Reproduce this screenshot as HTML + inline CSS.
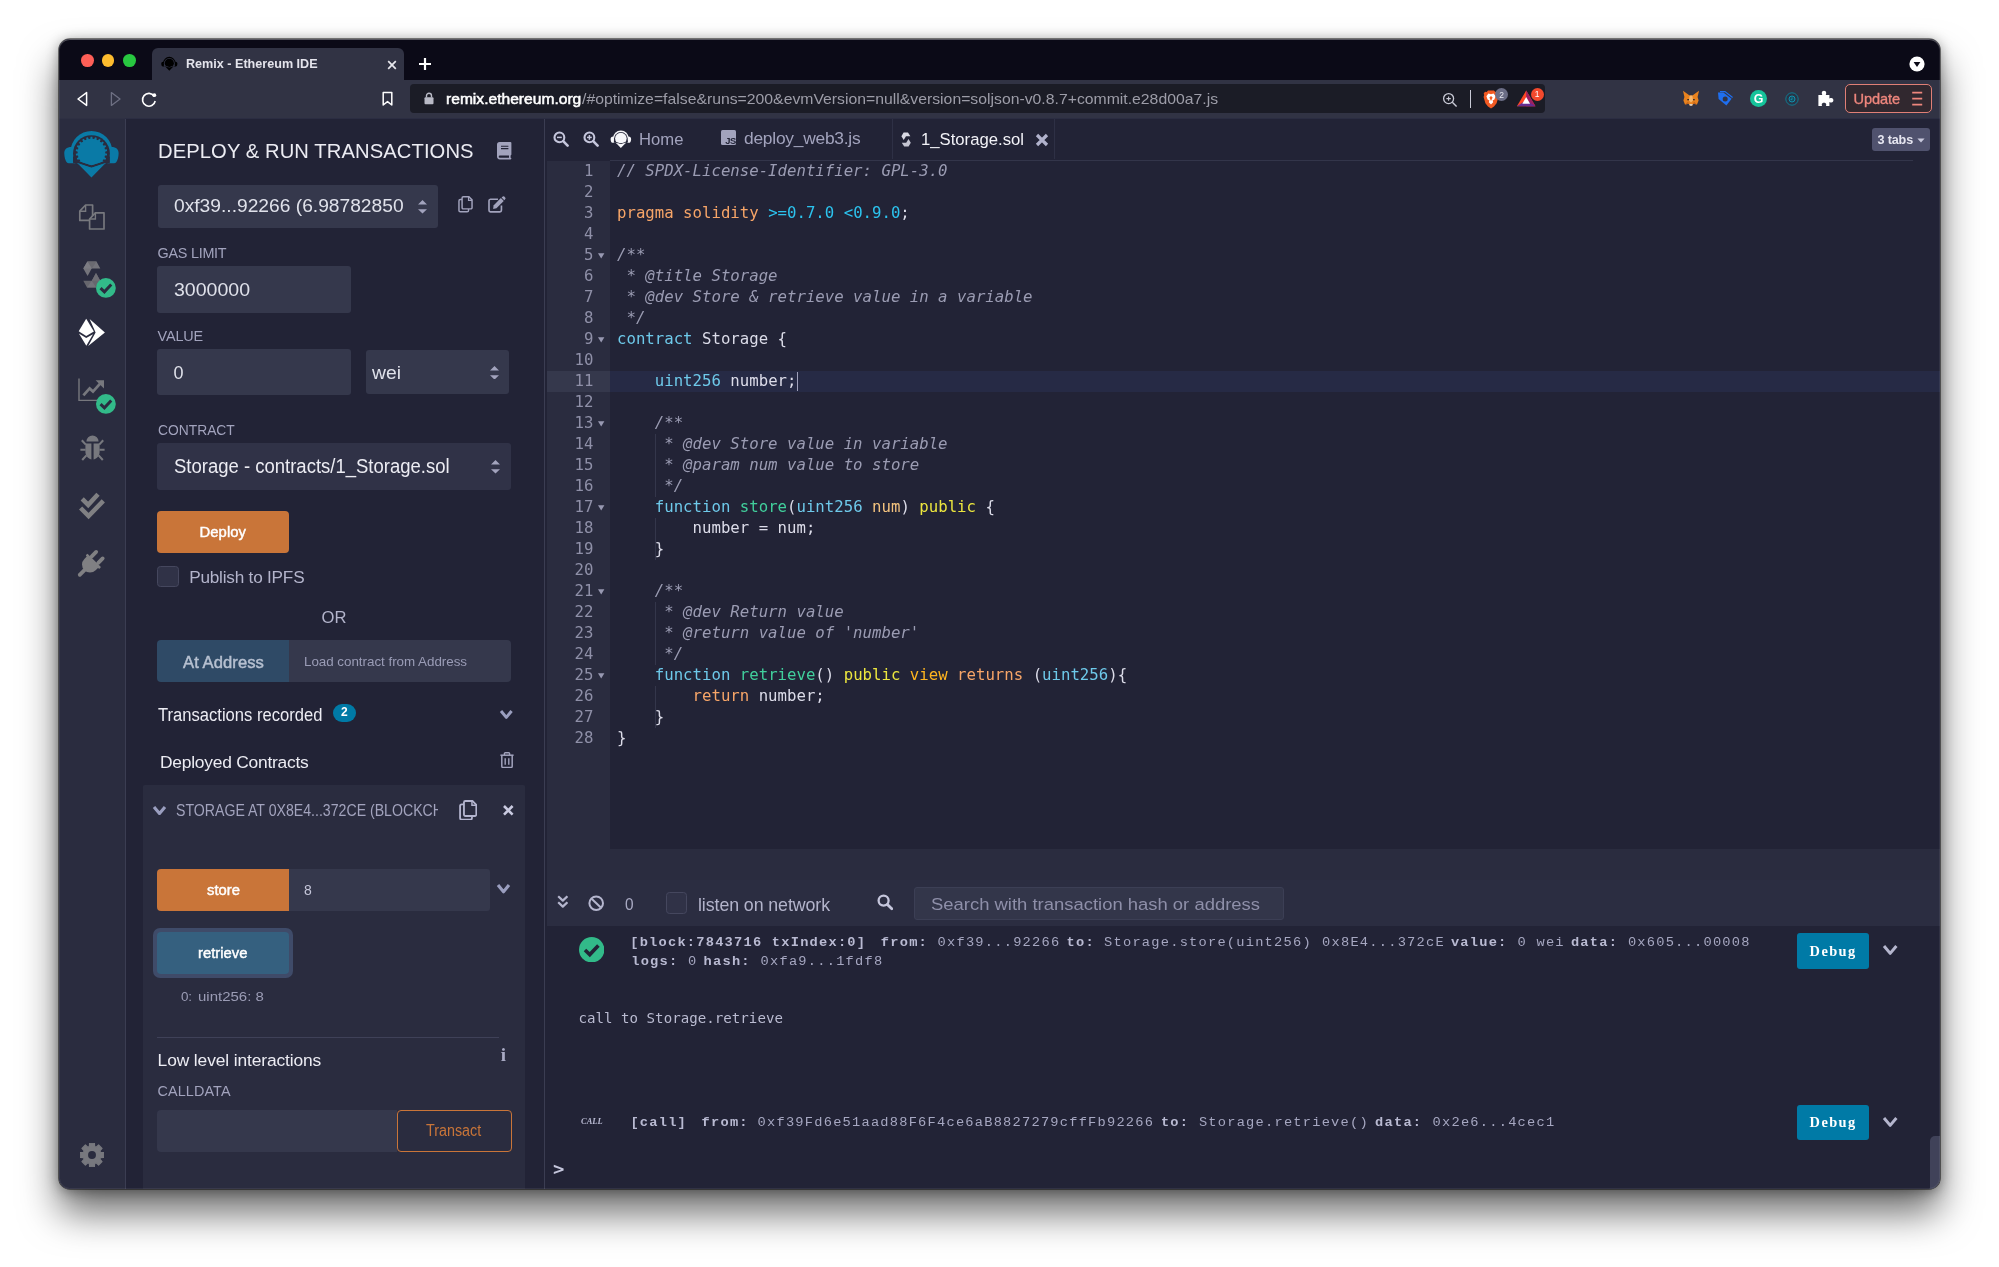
<!DOCTYPE html>
<html lang="en"><head><meta charset="utf-8"><title>Remix - Ethereum IDE</title>
<style>
html,body{margin:0;padding:0;background:#fff;}
body{width:1999px;height:1267px;overflow:hidden;position:relative;font-family:"Liberation Sans",sans-serif;}
#shadow{position:absolute;left:59px;top:39px;width:1881px;height:1150px;border-radius:11px;
 box-shadow:0 0 0 0.8px rgba(0,0,0,.6),0 2px 13px rgba(0,0,0,.38),0 24px 38px rgba(0,0,0,.57);}
#win{position:absolute;left:59px;top:39px;width:1881px;height:1150px;border-radius:11px;overflow:hidden;background:#222336;transform:translateZ(0);will-change:transform;}
#win div,#win svg,#win .t{position:absolute;}
#win .t{white-space:pre;margin:0;padding:0;}
#win pre.code{position:absolute;margin:0;white-space:pre;}
#win pre.code i{font-style:italic;}
#win div.s, #win div.s *{position:static;}
</style></head><body>
<div id="shadow"></div>
<div id="win">
<div style="left:0px;top:0px;width:1881px;height:41px;background:#0b0a17;"></div>
<div style="left:21.8px;top:15px;width:12.8px;height:12.8px;background:#fe5f57;border-radius:50%;"></div>
<div style="left:42.6px;top:15px;width:12.8px;height:12.8px;background:#febc2e;border-radius:50%;"></div>
<div style="left:63.8px;top:15px;width:12.8px;height:12.8px;background:#28c840;border-radius:50%;"></div>
<div style="left:93.4px;top:9.4px;width:251.6px;height:32px;background:#313344;border-radius:6px 6px 0 0;"></div>
<span class="t" style="top:16px;font:700 12.6px/18px 'Liberation Sans', sans-serif;color:#e4e4ec;letter-spacing:0.001px;left:127px;">Remix - Ethereum IDE</span>
<svg style="left:327.5px;top:20.5px;" width="10" height="10" viewBox="0 0 10 10"><path d="M1.2 1.2 L8.8 8.8 M8.8 1.2 L1.2 8.8" stroke="#e8e8ee" stroke-width="1.7" fill="none"/></svg>
<svg style="left:359px;top:18px;" width="14" height="14" viewBox="0 0 14 14"><path d="M7 1 V13 M1 7 H13" stroke="#fff" stroke-width="2.2" fill="none"/></svg>
<svg style="left:1850px;top:17px;" width="16" height="16" viewBox="0 0 16 16"><circle cx="8" cy="8" r="7.6" fill="#fff"/><path d="M4.6 6 H11.4 L8 11 Z" fill="#0b0a17"/></svg>
<div style="left:0px;top:41px;width:1881px;height:38.4px;background:#313344;"></div>
<svg style="left:16px;top:51px;" width="16" height="18" viewBox="0 0 16 18"><path d="M11.6 2.6 L3 9 L11.6 15.4 Z" fill="none" stroke="#fff" stroke-width="1.5" stroke-linejoin="round"/></svg>
<svg style="left:48px;top:51px;" width="16" height="18" viewBox="0 0 16 18"><path d="M4.4 2.6 L13 9 L4.4 15.4 Z" fill="none" stroke="#6d6f82" stroke-width="1.3" stroke-linejoin="round"/></svg>
<svg style="left:81px;top:51px;" width="18" height="18" viewBox="0 0 18 18"><path d="M14.2 6.2 A6.4 6.4 0 1 0 15.2 11" fill="none" stroke="#fff" stroke-width="1.6"/><circle cx="14.3" cy="5.2" r="1.9" fill="#fff"/></svg>
<svg style="left:322px;top:52px;" width="13" height="16" viewBox="0 0 13 16"><path d="M2.2 1.6 H10.8 V14 L6.5 10.6 L2.2 14 Z" fill="none" stroke="#fff" stroke-width="1.5" stroke-linejoin="round"/></svg>
<div style="left:351.4px;top:45.4px;width:1134.4px;height:28.6px;background:#1b1c26;border-radius:4px;"></div>
<svg style="left:365px;top:53px;" width="10" height="13" viewBox="0 0 10 13"><rect x="0.5" y="5.2" width="9" height="7" rx="1" fill="#b9bac6"/><path d="M2.5 5.5 V3.8 a2.5 2.5 0 0 1 5 0 V5.5" fill="none" stroke="#b9bac6" stroke-width="1.4"/></svg>
<span class="t" style="top:50px;font:400 14.6px/20px 'Liberation Sans', sans-serif;color:#ffffff;left:387px;-webkit-text-stroke:0.5px #fff;display:inline-block;transform:scaleX(1.0693);transform-origin:0 50%;">remix.ethereum.org</span>
<span class="t" style="top:50px;font:400 14.2px/20px 'Liberation Sans', sans-serif;color:#9d9da8;left:522.6px;display:inline-block;transform:scaleX(1.1116);transform-origin:0 50%;">/#optimize=false&amp;runs=200&amp;evmVersion=null&amp;version=soljson-v0.8.7+commit.e28d00a7.js</span>
<svg style="left:1383px;top:52.5px;" width="16" height="16" viewBox="0 0 16 16"><circle cx="6.6" cy="6.6" r="5" fill="none" stroke="#c9cad6" stroke-width="1.3"/><path d="M10.3 10.3 L14.6 14.6" stroke="#c9cad6" stroke-width="1.4"/><path d="M4.4 6.6 H8.8 M6.6 4.4 V8.8" stroke="#c9cad6" stroke-width="1.1"/></svg>
<div style="left:1411px;top:51px;width:1px;height:18px;background:#c9cad6;"></div>
<svg style="left:1423.5px;top:50.5px;" width="16" height="19" viewBox="0 0 16 19"><path d="M8 0.5 L11 0.5 L12.3 2 L14 1.8 L15.3 3.4 L14.8 5 L15.4 7 L13.6 13.2 L11 16.5 L8 18.5 L5 16.5 L2.4 13.2 L0.6 7 L1.2 5 L0.7 3.4 L2 1.8 L3.7 2 L5 0.5 Z" fill="#f25a23"/><path d="M8 4.2 L10.6 3.6 L12.6 6.2 L11.4 9.4 L9.6 10.6 L10.2 12.2 L8 14.4 L5.8 12.2 L6.4 10.6 L4.6 9.4 L3.4 6.2 L5.4 3.6 Z" fill="#fff"/><path d="M8 6 L9.6 7.6 L8 11 L6.4 7.6 Z" fill="#f25a23"/></svg>
<div style="left:1436.2px;top:49px;width:13px;height:13px;background:#6b6d85;border-radius:50%;"></div>
<div class="t" style="top:49.6px;font:400 8.5px/12px 'Liberation Sans', sans-serif;color:#e6e6ee;left:942.7px;width:1000px;text-align:center;"><span>2</span></div>
<svg style="left:1457.4px;top:50.4px;" width="20.4" height="18.6" viewBox="0 0 22 20"><path d="M11 1.5 L21 18.5 H1 Z" fill="#ff4724"/><path d="M11 1.5 L21 18.5 H11 Z" fill="#9e1f63"/><path d="M1 18.5 H21 L11 12 Z" fill="#662d91"/><path d="M11 8.6 L15.2 15.8 H6.8 Z" fill="#fff"/></svg>
<div style="left:1471.5px;top:48.5px;width:13px;height:13px;background:#f4492d;border-radius:50%;"></div>
<div class="t" style="top:49.2px;font:400 8.5px/12px 'Liberation Sans', sans-serif;color:#fff;left:978px;width:1000px;text-align:center;"><span>1</span></div>
<svg style="left:1623px;top:50.5px;" width="18" height="17" viewBox="0 0 18 17"><path d="M1 0.8 L7.6 5.4 H10.4 L17 0.8 L15.6 7 L16.6 10.4 L15 14.6 L11.4 13.8 L10.2 15.6 H7.8 L6.6 13.8 L3 14.6 L1.4 10.4 L2.4 7 Z" fill="#e8821e"/><path d="M7.6 5.4 H10.4 L11 10.6 L9 12.6 L7 10.6 Z" fill="#f5b56a"/><path d="M3 14.6 L6.6 13.8 L6.2 11.4 Z M15 14.6 L11.4 13.8 L11.8 11.4 Z" fill="#c3631a"/><path d="M7.4 14 H10.6 L10.2 15.8 H7.8 Z" fill="#d9d0c6"/><rect x="5.3" y="9" width="1.6" height="1.3" fill="#23252f"/><rect x="11.1" y="9" width="1.6" height="1.3" fill="#23252f"/></svg>
<svg style="left:1657.5px;top:52px;" width="16" height="16" viewBox="0 0 16 16"><path d="M1 1.4 H6.4 L14.6 7.8 L9.4 14.6 L1.6 8 Z" fill="#1f6ff0"/><circle cx="8.2" cy="8" r="2.5" fill="#313344"/><path d="M3 0.6 H8 L15.6 6.4" fill="none" stroke="#1f6ff0" stroke-width="1.2"/></svg>
<div style="left:1691px;top:50.9px;width:17.2px;height:17.2px;background:#15c39a;border-radius:50%;"></div>
<div class="t" style="top:51.8px;font:700 12.4px/17px 'Liberation Sans', sans-serif;color:#fff;left:1199.7px;width:1000px;text-align:center;"><span>G</span></div>
<svg style="left:1726px;top:52.5px;" width="14" height="14" viewBox="0 0 14 14"><circle cx="7" cy="7" r="6.2" fill="#2a3446" stroke="#0f7b93" stroke-width="1"/><circle cx="7" cy="7" r="3" fill="#16495c" stroke="#1390ad" stroke-width="1"/><path d="M7 5.4 V7.6 H5.6" stroke="#1390ad" stroke-width="0.9" fill="none"/></svg>
<svg style="left:1758.4px;top:50.8px;" width="16.6" height="16.6" viewBox="0 0 16.6 16.6"><path d="M1.4 5 H5.3 C4 2.2 5.4 0.8 7 0.8 C8.6 0.8 10 2.2 8.7 5 H12.4 V8.6 C15.2 7.3 16.4 8.7 16.4 10.3 C16.4 11.9 15.2 13.3 12.4 12 V16.2 H8.9 C9.9 13.8 8.6 12.8 7 12.8 C5.4 12.8 4.1 13.8 5.1 16.2 H1.4 Z" fill="#fff"/></svg>
<div style="left:1785.8px;top:45.3px;width:87px;height:28.8px;background:#31282f;border-radius:5px;box-sizing:border-box;border:1.3px solid #e07f76;"></div>
<span class="t" style="top:50.2px;font:400 14.6px/20px 'Liberation Sans', sans-serif;color:#ee867d;letter-spacing:-0.077px;left:1794.5px;-webkit-text-stroke:0.35px #ee867d;">Update</span>
<svg style="left:1853px;top:51px;" width="11" height="17" viewBox="0 0 11 17"><path d="M0.2 2.6 H10.2 M0.2 8.6 H10.2 M0.2 14.6 H10.2" stroke="#ee867d" stroke-width="1.7" fill="none"/></svg>
<div style="left:0px;top:79.4px;width:66px;height:1071px;background:#2a2c3f;"></div>
<div style="left:66px;top:79.4px;width:1px;height:1071px;background:#3b3d52;"></div>
<div style="left:67px;top:79.4px;width:418px;height:1071px;background:#222336;"></div>
<div style="left:485px;top:79.4px;width:1.2px;height:1071px;background:#3b3d52;"></div>
<svg style="left:1.03086px;top:85.9469px;" width="63.9472" height="57.0456" viewBox="0 0 142.3 126.7"><defs><clipPath id="rca"><path d="M30 20 H110 V76.5 L70 89.5 L30 76.5 Z"/></clipPath><clipPath id="rda"><rect x="0" y="0" width="142" height="85"/></clipPath></defs><circle cx="70" cy="59.5" r="46.5" fill="#0a7aa6" clip-path="url(#rda)"/><path d="M26 49 C14 49 9.5 55 9.5 63 C9.5 72 12 79 14.5 82 C16.5 84.5 18.5 85 21 85 H38 V49 Z" fill="#0a7aa6"/><path d="M114 49 C126 49 130.5 55 130.5 63 C130.5 72 128 79 125.5 82 C123.5 84.5 121.5 85 119 85 H102 V49 Z" fill="#0a7aa6"/><circle cx="70" cy="63.5" r="41" fill="#2a2c3f"/><path d="M29 70 H111 V84 L70 100 L29 84 Z" fill="#2a2c3f"/><path d="M67.4 30.9 L68.0 26.1 L72.0 26.1 L72.6 30.9 L76.0 31.4 L77.9 26.9 L81.8 28.0 L81.0 32.9 L84.1 34.3 L87.2 30.5 L90.6 32.7 L88.4 37.1 L91.0 39.3 L95.1 36.6 L97.7 39.6 L94.4 43.2 L96.3 46.1 L101.0 44.7 L102.6 48.3 L98.4 50.9 L99.4 54.2 L104.3 54.0 L104.9 58.0 L100.2 59.3 L100.2 62.7 L104.9 64.0 L104.3 68.0 L99.4 67.8 L98.4 71.1 L102.6 73.7 L101.0 77.3 L96.3 75.9 L94.4 78.8 L97.7 82.4 L95.1 85.4 L91.0 82.7 L88.4 84.9 L90.6 89.3 L87.2 91.5 L84.1 87.7 L81.0 89.1 L81.8 94.0 L77.9 95.1 L76.0 90.6 L72.6 91.1 L72.0 95.9 L68.0 95.9 L67.4 91.1 L64.0 90.6 L62.1 95.1 L58.2 94.0 L59.0 89.1 L55.9 87.7 L52.8 91.5 L49.4 89.3 L51.6 84.9 L49.0 82.7 L44.9 85.4 L42.3 82.4 L45.6 78.8 L43.7 75.9 L39.0 77.3 L37.4 73.7 L41.6 71.1 L40.6 67.8 L35.7 68.0 L35.1 64.0 L39.8 62.7 L39.8 59.3 L35.1 58.0 L35.7 54.0 L40.6 54.2 L41.6 50.9 L37.4 48.3 L39.0 44.7 L43.7 46.1 L45.6 43.2 L42.3 39.6 L44.9 36.6 L49.0 39.3 L51.6 37.1 L49.4 32.7 L52.8 30.5 L55.9 34.3 L59.0 32.9 L58.2 28.0 L62.1 26.9 L64.0 31.4 Z" fill="#0a7aa6" clip-path="url(#rca)"/><circle cx="70" cy="61" r="30.6" fill="#0a7aa6" clip-path="url(#rca)"/><path d="M40 86 L70 94.8 L100 86 L70 116.5 Z" fill="#0a7aa6"/><path d="M36.5 85 L41 85 L70 94.8 L99 85 L103.5 85 L70 99 Z" fill="#0a7aa6"/></svg>
<svg style="left:19px;top:164px;" width="28" height="28" viewBox="0 0 28 28"><path d="M1.8 8.2 L7.6 2 H14.6 V17.4 H1.8 Z" fill="#2a2c3f" stroke="#77787e" stroke-width="1.7" stroke-linejoin="round"/><path d="M7.6 2 V8.2 H1.8" fill="none" stroke="#77787e" stroke-width="1.4"/><path d="M11.6 16 L17.4 9.8 H26 V26 H11.6 Z" fill="#2a2c3f" stroke="#77787e" stroke-width="1.7" stroke-linejoin="round"/><path d="M17.4 9.8 V16 H11.6" fill="none" stroke="#77787e" stroke-width="1.4"/></svg>
<svg style="left:21px;top:219px;" width="24" height="33" viewBox="0 0 24 33"><g transform="translate(-80,-258)"><path d="M87.4 261.6 H96.5 L100.3 268.4 H91.7 L87.6 276.1 L83.3 268.4 Z" fill="#74747b"/><path d="M87.4 261.6 L91.9 268.4 L96.5 261.6 Z" fill="#6a6a71"/><path d="M83.3 268.4 H91.7 L87.4 261.6 Z" fill="#7c7c83"/><path d="M96.1 287.6 H87 L83.3 280.8 H91.8 L96 273.1 L100.3 280.8 Z" fill="#66666d"/><path d="M96.1 287.6 L91.7 280.8 L87 287.6 Z" fill="#73737a"/><path d="M100.3 280.8 H91.8 L96 273.1 Z" fill="#6e6e75"/></g></svg>
<svg style="left:37.4px;top:239.3px;" width="19.8" height="19.8" viewBox="0 0 20 20"><circle cx="10" cy="10" r="10" fill="#32ba89"/><path d="M4.6 10.2 L8.5 14 L15.4 6.6" fill="none" stroke="#2a2c3f" stroke-width="3.00"/></svg>
<svg style="left:17px;top:277px;" width="32" height="32" viewBox="0 0 32 32"><g transform="translate(-76,-316)" fill="#fff"><path d="M86.2 318.8 L78.7 331.3 L86.2 335.9 L93.9 331.6 Z"/><path d="M78.9 333.6 L86.2 338 L93 334.2 L86.3 345.8 Z"/><path d="M89.6 318.9 L104.9 332.6 L88.2 346 L95.6 332.6 Z"/></g></svg>
<svg style="left:19px;top:339px;" width="28" height="24" viewBox="0 0 28 24"><path d="M1 0.6 V22.4 H20" fill="none" stroke="#77787e" stroke-width="1.4"/><path d="M5.4 17.4 L11.6 10.4 L15 13.6 L23 4.6" fill="none" stroke="#77787e" stroke-width="2.8"/><path d="M17.6 2.2 H26 V10.6 Z" fill="#77787e"/></svg>
<svg style="left:37.4px;top:355.3px;" width="19.8" height="19.8" viewBox="0 0 20 20"><circle cx="10" cy="10" r="10" fill="#32ba89"/><path d="M4.6 10.2 L8.5 14 L15.4 6.6" fill="none" stroke="#2a2c3f" stroke-width="3.00"/></svg>
<svg style="left:20.5px;top:395.5px;" width="25" height="26" viewBox="0 0 25 26"><path d="M6.4 6.6 A6.1 6.1 0 0 1 18.6 6.6 Z" fill="#77787e"/><path d="M5.4 8.4 H11.4 V24.4 C7.4 23.8 5.4 20.4 5.4 16.6 Z M13.6 8.4 H19.6 V16.6 C19.6 20.4 17.6 23.8 13.6 24.4 Z" fill="#77787e"/><path d="M0.4 14.8 H5.6 M19.4 14.8 H24.6 M5.8 9.6 L1.8 5.2 M19.2 9.6 L23.2 5.2 M6.4 20.4 L2.2 25 M18.6 20.4 L22.8 25" stroke="#77787e" stroke-width="2.1" fill="none"/></svg>
<svg style="left:17px;top:451px;" width="32" height="30" viewBox="0 0 32 30"><g transform="translate(-76,-490)" fill="none" stroke="#808083" stroke-width="4.5"><path d="M82.2 498.9 L88.2 504.9 L98 494.3"/><path d="M80.6 508 L88.6 516 L103.3 500.9"/></g></svg>
<svg style="left:15px;top:507px;" width="36" height="36" viewBox="0 0 36 36"><g transform="translate(20.25,14.35) rotate(45)" fill="#808083"><rect x="-9.6" y="0" width="19.2" height="2.6" rx="0.8"/><path d="M-8 2 H8 V6 A8 8 0 0 1 -8 6 Z"/><rect x="-6.5" y="-9.2" width="3.8" height="10" rx="1.9"/><rect x="2.7" y="-9.2" width="3.8" height="10" rx="1.9"/><rect x="-1.9" y="12" width="3.8" height="10.4" rx="1.9"/></g></svg>
<svg style="left:20.8px;top:1103.6px;" width="24" height="24" viewBox="0 0 24 24"><path d="M9.39 3.51 L9.57 0.25 L14.43 0.25 L14.61 3.51 L16.16 4.15 L18.59 1.97 L22.03 5.41 L19.85 7.84 L20.49 9.39 L23.75 9.57 L23.75 14.43 L20.49 14.61 L19.85 16.16 L22.03 18.59 L18.59 22.03 L16.16 19.85 L14.61 20.49 L14.43 23.75 L9.57 23.75 L9.39 20.49 L7.84 19.85 L5.41 22.03 L1.97 18.59 L4.15 16.16 L3.51 14.61 L0.25 14.43 L0.25 9.57 L3.51 9.39 L4.15 7.84 L1.97 5.41 L5.41 1.97 L7.84 4.15 Z" fill="#77787e" stroke="#77787e" stroke-width="1.2" stroke-linejoin="round"/><circle cx="12.0" cy="12.0" r="3.96" fill="#2a2c3f"/></svg>
<svg style="left:100.733px;top:16.2415px;" width="18.9733" height="17.1382" viewBox="0 0 142.3 126.7"><defs><clipPath id="rcf"><path d="M30 20 H110 V76.5 L70 89.5 L30 76.5 Z"/></clipPath><clipPath id="rdf"><rect x="0" y="0" width="142" height="85"/></clipPath></defs><circle cx="70" cy="59.5" r="46.5" fill="#000" clip-path="url(#rdf)"/><path d="M26 49 C14 49 9.5 55 9.5 63 C9.5 72 12 79 14.5 82 C16.5 84.5 18.5 85 21 85 H38 V49 Z" fill="#000"/><path d="M114 49 C126 49 130.5 55 130.5 63 C130.5 72 128 79 125.5 82 C123.5 84.5 121.5 85 119 85 H102 V49 Z" fill="#000"/><circle cx="70" cy="63.5" r="41" fill="#313344"/><path d="M29 70 H111 V84 L70 100 L29 84 Z" fill="#313344"/><circle cx="70" cy="61" r="34" fill="#000" clip-path="url(#rcf)"/><path d="M40 86 L70 94.8 L100 86 L70 116.5 Z" fill="#000"/><path d="M36.5 85 L41 85 L70 94.8 L99 85 L103.5 85 L70 99 Z" fill="#000"/></svg>
<div style="left:0px;top:79px;width:66px;height:1px;background:#2e3043;"></div>
<div style="left:66px;top:79px;width:1815px;height:1px;background:#2b2d42;"></div>
<span class="t" style="top:98px;font:400 20.2px/28px 'Liberation Sans', sans-serif;color:#ececf3;letter-spacing:0.090px;left:99px;">DEPLOY &amp; RUN TRANSACTIONS</span>
<svg style="left:438px;top:103.4px;" width="15" height="17.4" viewBox="0 0 15 17.4"><path d="M2.6 0 H13.4 A1 1 0 0 1 14.4 1 V12.6 A1 1 0 0 1 13.6 13.5 V15.8 A0.8 0.8 0 0 1 13.6 17.4 H2.8 A2.8 2.8 0 0 1 0 14.6 V2.6 A2.6 2.6 0 0 1 2.6 0 Z" fill="#a2a3bd"/><path d="M2.8 13.6 H12 V15.8 H2.8 A1.1 1.1 0 0 1 2.8 13.6 Z" fill="#222336"/><path d="M4 4.2 H11.4 M4 6.6 H11.4" stroke="#222336" stroke-width="1.1"/></svg>
<div style="left:99.4px;top:146px;width:279.2px;height:43.4px;background:#35384c;border-radius:3px;"></div>
<span class="t" style="top:155.1px;font:400 18px/25px 'Liberation Sans', sans-serif;color:#dfe1ea;left:115.4px;display:inline-block;transform:scaleX(1.0670);transform-origin:0 50%;">0xf39...92266 (6.98782850</span>
<svg style="left:359.3px;top:161px;" width="9" height="13.6" viewBox="0 0 9 13.6"><path d="M0 4.4 L4.5 0 L9 4.4 Z M0 9.2 L4.5 13.600000000000001 L9 9.2 Z" fill="#a2a3bd"/></svg>
<svg style="left:399px;top:157px;" width="15" height="16.6" viewBox="0 0 15 17"><rect x="0.8" y="3.6" width="9.8" height="12.6" rx="1.4" fill="none" stroke="#a2a3bd" stroke-width="1.5"/><path d="M5.2 0.8 H11 L14.2 4 V12 A1.2 1.2 0 0 1 13 13.2 H5.2 A1.2 1.2 0 0 1 4 12 V2 A1.2 1.2 0 0 1 5.2 0.8 Z" fill="#222336" stroke="#a2a3bd" stroke-width="1.5"/><path d="M10.6 0.8 V4.4 H14.2" fill="none" stroke="#a2a3bd" stroke-width="1.2000000000000002"/></svg>
<svg style="left:429.4px;top:157.4px;" width="18" height="16.4" viewBox="0 -0.8 18.4 17"><path d="M10.2 2.6 H2.4 A1.6 1.6 0 0 0 0.9 4.2 V14 A1.6 1.6 0 0 0 2.4 15.6 H12.2 A1.6 1.6 0 0 0 13.8 14 V9" fill="none" stroke="#a2a3bd" stroke-width="1.7"/><path d="M5.6 9 L13.2 1.4 L16.2 4.4 L8.6 12 L5.2 12.6 Z" fill="#a2a3bd"/><path d="M14 0.8 L15.2 -0.2 A1.2 1.2 0 0 1 16.8 -0.2 L17.8 0.9 A1.2 1.2 0 0 1 17.8 2.4 L16.8 3.6 Z" fill="#a2a3bd"/></svg>
<span class="t" style="top:204.4px;font:400 14.4px/20px 'Liberation Sans', sans-serif;color:#a2a3bd;letter-spacing:-0.264px;left:98.6px;">GAS LIMIT</span>
<div style="left:98.4px;top:227.4px;width:194px;height:46.2px;background:#35384c;border-radius:3px;"></div>
<span class="t" style="top:239.3px;font:400 18px/25px 'Liberation Sans', sans-serif;color:#dfe1ea;left:114.6px;display:inline-block;transform:scaleX(1.0845);transform-origin:0 50%;">3000000</span>
<span class="t" style="top:287.4px;font:400 14.4px/20px 'Liberation Sans', sans-serif;color:#a2a3bd;letter-spacing:-0.145px;left:98.6px;">VALUE</span>
<div style="left:98.4px;top:310.4px;width:194px;height:46px;background:#35384c;border-radius:3px;"></div>
<span class="t" style="top:321.9px;font:400 18px/25px 'Liberation Sans', sans-serif;color:#dfe1ea;letter-spacing:0.184px;left:114.4px;">0</span>
<div style="left:307px;top:311.4px;width:143px;height:44px;background:#35384c;border-radius:3px;"></div>
<span class="t" style="top:321.5px;font:400 18px/25px 'Liberation Sans', sans-serif;color:#dfe1ea;left:313px;display:inline-block;transform:scaleX(1.0735);transform-origin:0 50%;">wei</span>
<svg style="left:430.5px;top:326.8px;" width="9" height="13.6" viewBox="0 0 9 13.6"><path d="M0 4.4 L4.5 0 L9 4.4 Z M0 9.2 L4.5 13.600000000000001 L9 9.2 Z" fill="#a2a3bd"/></svg>
<span class="t" style="top:380.8px;font:400 14.4px/20px 'Liberation Sans', sans-serif;color:#a2a3bd;left:98.6px;display:inline-block;transform:scaleX(0.9606);transform-origin:0 50%;">CONTRACT</span>
<div style="left:98.4px;top:404.4px;width:354px;height:46.2px;background:#303247;border-radius:3px;"></div>
<span class="t" style="top:414.4px;font:400 19.4px/27px 'Liberation Sans', sans-serif;color:#ececf3;left:115.4px;display:inline-block;transform:scaleX(0.9540);transform-origin:0 50%;">Storage - contracts/1_Storage.sol</span>
<svg style="left:431.9px;top:421.4px;" width="9" height="13.6" viewBox="0 0 9 13.6"><path d="M0 4.4 L4.5 0 L9 4.4 Z M0 9.2 L4.5 13.600000000000001 L9 9.2 Z" fill="#a2a3bd"/></svg>
<div style="left:98.4px;top:472.4px;width:131.4px;height:41.8px;background:#c97539;border-radius:4px;"></div>
<span class="t" style="top:482.9px;font:400 14.8px/21px 'Liberation Sans', sans-serif;color:#fff;letter-spacing:0.056px;left:140.6px;-webkit-text-stroke:0.45px #fff;">Deploy</span>
<div style="left:98.4px;top:527px;width:21.2px;height:20.6px;background:#303247;border-radius:3.5px;box-sizing:border-box;border:1.2px solid #45475e;"></div>
<span class="t" style="top:525.9px;font:400 17.2px/24px 'Liberation Sans', sans-serif;color:#b3b4cb;letter-spacing:-0.218px;left:130.2px;">Publish to IPFS</span>
<div class="t" style="top:566.5px;font:400 16.6px/23px 'Liberation Sans', sans-serif;color:#b3b4cb;left:-225px;width:1000px;text-align:center;"><span>OR</span></div>
<div style="left:98.4px;top:601.4px;width:131.4px;height:41.6px;background:#2f4a66;border-radius:4px 0 0 4px;"></div>
<span class="t" style="top:611.9px;font:400 16.6px/23px 'Liberation Sans', sans-serif;color:#b7c1d1;letter-spacing:0.075px;left:124px;-webkit-text-stroke:0.45px #b7c1d1;">At Address</span>
<div style="left:229.8px;top:601.4px;width:222.6px;height:41.6px;background:#35384c;border-radius:0 4px 4px 0;"></div>
<span class="t" style="top:613.3px;font:400 13.4px/19px 'Liberation Sans', sans-serif;color:#9a9cb6;letter-spacing:-0.029px;left:245px;">Load contract from Address</span>
<span class="t" style="top:664.1px;font:400 17.6px/25px 'Liberation Sans', sans-serif;color:#ececf3;left:98.6px;display:inline-block;transform:scaleX(0.9426);transform-origin:0 50%;">Transactions recorded</span>
<div style="left:273.6px;top:664.6px;width:23.4px;height:18.4px;background:#007aa6;border-radius:9.2px;"></div>
<div class="t" style="top:665.3px;font:700 12px/17px 'Liberation Sans', sans-serif;color:#fff;left:-214.7px;width:1000px;text-align:center;"><span>2</span></div>
<svg style="left:439.5px;top:670.3px;" width="14.6" height="10.4" viewBox="0 0 14.6 10.4"><path d="M2 2 L7.3 8.4 L12.6 2" fill="none" stroke="#9a9ebf" stroke-width="3" stroke-linejoin="round"/></svg>
<span class="t" style="top:711px;font:400 17.4px/24px 'Liberation Sans', sans-serif;color:#ececf3;letter-spacing:-0.230px;left:101px;">Deployed Contracts</span>
<svg style="left:441px;top:713px;" width="14" height="16.4" viewBox="0 0 14 16.4"><path d="M0.4 3.2 H13.6" stroke="#a2a3bd" stroke-width="1.5"/><path d="M4.4 3 V1.6 A0.9 0.9 0 0 1 5.3 0.7 H8.7 A0.9 0.9 0 0 1 9.6 1.6 V3" fill="none" stroke="#a2a3bd" stroke-width="1.4"/><path d="M1.8 3.4 V14.2 A1.4 1.4 0 0 0 3.2 15.6 H10.8 A1.4 1.4 0 0 0 12.2 14.2 V3.4" fill="none" stroke="#a2a3bd" stroke-width="1.5"/><path d="M5.2 6.2 V12.8 M8.8 6.2 V12.8" stroke="#a2a3bd" stroke-width="1.4"/></svg>
<div style="left:84px;top:746px;width:382px;height:410px;background:#2a2c3f;border-radius:1.5px;"></div>
<svg style="left:93.2px;top:765.5px;" width="15" height="10.6" viewBox="0 0 15 10.6"><path d="M2 2 L7.5 8.6 L13 2" fill="none" stroke="#9a9ebf" stroke-width="3.1" stroke-linejoin="round"/></svg>
<span class="t" style="top:760.3px;font:400 16.2px/23px 'Liberation Sans', sans-serif;color:#a2a3bd;left:117px;display:inline-block;transform:scaleX(0.8729);transform-origin:0 50%;">STORAGE AT 0X8E4...372CE (BLOCKCH</span>
<div style="left:379px;top:759px;width:18px;height:26px;background:#2a2c3f;"></div>
<svg style="left:399.6px;top:760.6px;" width="18.4" height="20.6" viewBox="0 0 15 17"><rect x="0.8" y="3.6" width="9.8" height="12.6" rx="1.4" fill="none" stroke="#b4b5cf" stroke-width="1.5"/><path d="M5.2 0.8 H11 L14.2 4 V12 A1.2 1.2 0 0 1 13 13.2 H5.2 A1.2 1.2 0 0 1 4 12 V2 A1.2 1.2 0 0 1 5.2 0.8 Z" fill="#2a2c3f" stroke="#b4b5cf" stroke-width="1.5"/><path d="M10.6 0.8 V4.4 H14.2" fill="none" stroke="#b4b5cf" stroke-width="1.2000000000000002"/></svg>
<svg style="left:443.2px;top:764.7px;" width="12.6" height="12.6" viewBox="0 0 12.6 12.6"><path d="M2 2 L10.6 10.6 M10.6 2 L2 10.6" stroke="#c9cae0" stroke-width="2.6" fill="none"/></svg>
<div style="left:98.4px;top:830.4px;width:131.4px;height:42px;background:#c97539;border-radius:4px 0 0 4px;"></div>
<span class="t" style="top:841.1px;font:400 14.8px/21px 'Liberation Sans', sans-serif;color:#fff;letter-spacing:0.019px;left:148px;-webkit-text-stroke:0.45px #fff;">store</span>
<div style="left:229.8px;top:830.4px;width:201.2px;height:42px;background:#35384c;border-radius:0 3px 3px 0;"></div>
<span class="t" style="top:840.8px;font:400 14px/20px 'Liberation Sans', sans-serif;color:#c5c6d9;letter-spacing:0.203px;left:245px;">8</span>
<svg style="left:437.3px;top:844.2px;" width="15" height="10.8" viewBox="0 0 15 10.8"><path d="M2 2 L7.5 8.8 L13 2" fill="none" stroke="#9a9ebf" stroke-width="3.1" stroke-linejoin="round"/></svg>
<div style="left:94.4px;top:889.4px;width:139.6px;height:49.6px;background:#3f4b69;border-radius:7px;"></div>
<div style="left:98.4px;top:893px;width:131.4px;height:42px;background:#35607f;border-radius:4px;"></div>
<span class="t" style="top:903.9px;font:400 14.8px/21px 'Liberation Sans', sans-serif;color:#fff;letter-spacing:0.007px;left:139px;-webkit-text-stroke:0.45px #fff;">retrieve</span>
<span class="t" style="top:947.9px;font:400 13.4px/19px 'Liberation Sans', sans-serif;color:#9b9cb5;letter-spacing:-0.286px;left:122px;">0:</span>
<span class="t" style="top:947.9px;font:400 13.4px/19px 'Liberation Sans', sans-serif;color:#9b9cb5;left:138.6px;display:inline-block;transform:scaleX(1.1185);transform-origin:0 50%;">uint256: 8</span>
<div style="left:98.4px;top:997.6px;width:342px;height:1.2px;background:#3f4158;"></div>
<span class="t" style="top:1009px;font:400 17.4px/24px 'Liberation Sans', sans-serif;color:#ececf3;letter-spacing:-0.121px;left:98.6px;">Low level interactions</span>
<div class="t" style="top:1002.1px;font:700 19px/27px 'Liberation Serif', serif;color:#a9aac4;left:-55.6px;width:1000px;text-align:center;"><span>i</span></div>
<span class="t" style="top:1042.2px;font:400 14.4px/20px 'Liberation Sans', sans-serif;color:#a2a3bd;letter-spacing:0.094px;left:98.6px;">CALLDATA</span>
<div style="left:98.4px;top:1071px;width:239.6px;height:41.6px;background:#35384c;border-radius:4px 0 0 4px;"></div>
<div style="left:338px;top:1071px;width:114.6px;height:41.6px;background:#2a2c3f;border-radius:4px;box-sizing:border-box;border:1.3px solid #c97539;"></div>
<span class="t" style="top:1080.8px;font:400 15.6px/22px 'Liberation Sans', sans-serif;color:#c97539;left:367.4px;display:inline-block;transform:scaleX(0.9186);transform-origin:0 50%;">Transact</span>
<svg style="left:494.2px;top:91.8px;" width="16" height="16" viewBox="0 0 16 16"><circle cx="6.4" cy="6.4" r="4.9" fill="none" stroke="#c5c6dc" stroke-width="2.1"/><path d="M10.2 10.2 L14.6 14.6" stroke="#c5c6dc" stroke-width="2.6" stroke-linecap="round"/><path d="M4 6.4 H8.8" stroke="#c5c6dc" stroke-width="1.5"/></svg>
<svg style="left:523.6px;top:91.8px;" width="16" height="16" viewBox="0 0 16 16"><circle cx="6.4" cy="6.4" r="4.9" fill="none" stroke="#c5c6dc" stroke-width="2.1"/><path d="M10.2 10.2 L14.6 14.6" stroke="#c5c6dc" stroke-width="2.6" stroke-linecap="round"/><path d="M4 6.4 H8.8" stroke="#c5c6dc" stroke-width="1.5"/><path d="M6.4 4 V8.8" stroke="#c5c6dc" stroke-width="1.5"/></svg>
<svg style="left:549.589px;top:88.5391px;" width="24.1266" height="22.0348" viewBox="0 0 142.3 126.7"><defs><clipPath id="rch"><path d="M30 20 H110 V76.5 L70 89.5 L30 76.5 Z"/></clipPath><clipPath id="rdh"><rect x="0" y="0" width="142" height="85"/></clipPath></defs><circle cx="70" cy="59.5" r="46.5" fill="#f6f6fa" clip-path="url(#rdh)"/><path d="M26 49 C14 49 9.5 55 9.5 63 C9.5 72 12 79 14.5 82 C16.5 84.5 18.5 85 21 85 H38 V49 Z" fill="#f6f6fa"/><path d="M114 49 C126 49 130.5 55 130.5 63 C130.5 72 128 79 125.5 82 C123.5 84.5 121.5 85 119 85 H102 V49 Z" fill="#f6f6fa"/><circle cx="70" cy="63.5" r="41" fill="#222336"/><path d="M29 70 H111 V84 L70 100 L29 84 Z" fill="#222336"/><circle cx="70" cy="61" r="34" fill="#f6f6fa" clip-path="url(#rch)"/><path d="M40 86 L70 94.8 L100 86 L70 116.5 Z" fill="#f6f6fa"/><path d="M36.5 85 L41 85 L70 94.8 L99 85 L103.5 85 L70 99 Z" fill="#f6f6fa"/></svg>
<span class="t" style="top:87.8px;font:400 17.4px/24px 'Liberation Sans', sans-serif;color:#a2a3bd;left:580.4px;display:inline-block;transform:scaleX(0.9571);transform-origin:0 50%;">Home</span>
<div style="left:662.4px;top:91px;width:14.8px;height:15.2px;background:#a2a3bd;border-radius:1.5px;"></div>
<span class="t" style="top:94.7px;font:700 9.4px/13px 'Liberation Sans', sans-serif;color:#222336;letter-spacing:-0.400px;right:1204.2px;">JS</span>
<span class="t" style="top:87.4px;font:400 17.4px/24px 'Liberation Sans', sans-serif;color:#a2a3bd;letter-spacing:-0.249px;left:685px;">deploy_web3.js</span>
<div style="left:833.4px;top:80px;width:1px;height:40.4px;background:#2e3045;"></div>
<div style="left:995px;top:80px;width:1px;height:40.4px;background:#2e3045;"></div>
<svg style="left:841.6px;top:92.6px;" width="10.4" height="15" viewBox="0 0 10.4 15"><path d="M2.6 0.4 H7 L9.4 4.2 H5 L2.7 8 L0.4 4.2 Z" fill="#d9d9e4"/><path d="M7.6 14.6 H3.2 L0.8 10.8 H5.2 L7.5 7 L9.8 10.8 Z" fill="#c5c5d2"/></svg>
<span class="t" style="top:87.6px;font:400 17.4px/24px 'Liberation Sans', sans-serif;color:#f2f2f7;left:861.8px;display:inline-block;transform:scaleX(0.9597);transform-origin:0 50%;">1_Storage.sol</span>
<svg style="left:975.8px;top:93.6px;" width="14" height="14" viewBox="0 0 14 14"><path d="M2 2 L12 12 M12 2 L2 12" stroke="#b1b2cc" stroke-width="3.2" fill="none"/></svg>
<div style="left:1813px;top:89px;width:57.8px;height:23.2px;background:#50526e;border-radius:3px;"></div>
<span class="t" style="top:91.6px;font:700 12.6px/18px 'Liberation Sans', sans-serif;color:#e6e6f0;letter-spacing:-0.168px;left:1818.6px;">3 tabs</span>
<svg style="left:1857.6px;top:99px;" width="8" height="5" viewBox="0 0 8 5"><path d="M0.4 0.4 H7.6 L4 4.4 Z" fill="#c9cade"/></svg>
<div style="left:488px;top:122px;width:63px;height:688px;background:#2a2c3f;"></div>
<div style="left:551px;top:120.6px;width:1303px;height:1.2px;background:#33354a;"></div>
<div style="left:488px;top:332px;width:63px;height:21px;background:#35384c;"></div>
<div style="left:551px;top:332px;width:1330px;height:21px;background:#262a45;"></div>
<pre class="code" style="left:558px;top:120.7px;font:15.7px/21px 'DejaVu Sans Mono', 'Liberation Mono', monospace;color:#dcdce9;"><i style="color:#9b9cb3">// SPDX-License-Identifier: GPL-3.0</i>

<span style="color:#f7a568">pragma solidity</span> <span style="color:#2cc3ee">&gt;=0.7.0 &lt;0.9.0</span><span style="color:#dcdce9">;</span>

<i style="color:#9b9cb3">/**</i>
<i style="color:#9b9cb3"> * @title Storage</i>
<i style="color:#9b9cb3"> * @dev Store &amp; retrieve value in a variable</i>
<i style="color:#9b9cb3"> */</i>
<span style="color:#6ec9ea">contract</span><span style="color:#dcdce9"> Storage {</span>

    <span style="color:#6ec9ea">uint256</span><span style="color:#dcdce9"> number;</span>

    <i style="color:#9b9cb3">/**</i>
    <i style="color:#9b9cb3"> * @dev Store value in variable</i>
    <i style="color:#9b9cb3"> * @param num value to store</i>
    <i style="color:#9b9cb3"> */</i>
    <span style="color:#6ec9ea">function</span> <span style="color:#41cf9c">store</span><span style="color:#dcdce9">(</span><span style="color:#6ec9ea">uint256</span> <span style="color:#f3c27e">num</span><span style="color:#dcdce9">) </span><span style="color:#ece63e">public</span><span style="color:#dcdce9"> {</span>
        <span style="color:#dcdce9">number = num;</span>
    <span style="color:#dcdce9">}</span>

    <i style="color:#9b9cb3">/**</i>
    <i style="color:#9b9cb3"> * @dev Return value</i>
    <i style="color:#9b9cb3"> * @return value of 'number'</i>
    <i style="color:#9b9cb3"> */</i>
    <span style="color:#6ec9ea">function</span> <span style="color:#41cf9c">retrieve</span><span style="color:#dcdce9">() </span><span style="color:#ece63e">public</span> <span style="color:#ffb41f">view</span> <span style="color:#f7a568">returns</span><span style="color:#dcdce9"> (</span><span style="color:#6ec9ea">uint256</span><span style="color:#dcdce9">){</span>
        <span style="color:#f7a568">return</span><span style="color:#dcdce9"> number;</span>
    <span style="color:#dcdce9">}</span>
<span style="color:#dcdce9">}</span></pre>
<pre class="code" style="left:488px;top:120.7px;width:46.4px;text-align:right;font:15.7px/21px 'DejaVu Sans Mono', 'Liberation Mono', monospace;color:#8f90a8;">1
2
3
4
5
6
7
8
9
10
11
12
13
14
15
16
17
18
19
20
21
22
23
24
25
26
27
28</pre>
<svg style="left:539.4px;top:214.4px;" width="6.4" height="5.6" viewBox="0 0 6.4 5.6"><path d="M0 0.2 H6.4 L3.2 5.4 Z" fill="#9899b2"/></svg>
<svg style="left:539.4px;top:298.4px;" width="6.4" height="5.6" viewBox="0 0 6.4 5.6"><path d="M0 0.2 H6.4 L3.2 5.4 Z" fill="#9899b2"/></svg>
<svg style="left:539.4px;top:382.4px;" width="6.4" height="5.6" viewBox="0 0 6.4 5.6"><path d="M0 0.2 H6.4 L3.2 5.4 Z" fill="#9899b2"/></svg>
<svg style="left:539.4px;top:466.4px;" width="6.4" height="5.6" viewBox="0 0 6.4 5.6"><path d="M0 0.2 H6.4 L3.2 5.4 Z" fill="#9899b2"/></svg>
<svg style="left:539.4px;top:550.4px;" width="6.4" height="5.6" viewBox="0 0 6.4 5.6"><path d="M0 0.2 H6.4 L3.2 5.4 Z" fill="#9899b2"/></svg>
<svg style="left:539.4px;top:634.4px;" width="6.4" height="5.6" viewBox="0 0 6.4 5.6"><path d="M0 0.2 H6.4 L3.2 5.4 Z" fill="#9899b2"/></svg>
<div style="left:596.2px;top:395px;width:1px;height:63px;background:#34364b;"></div>
<div style="left:596.2px;top:479px;width:1px;height:42px;background:#34364b;"></div>
<div style="left:596.2px;top:563px;width:1px;height:63px;background:#34364b;"></div>
<div style="left:596.2px;top:647px;width:1px;height:42px;background:#34364b;"></div>
<div style="left:738.2px;top:333px;width:1.2px;height:19px;background:#9fa0ba;"></div>
<div style="left:488px;top:810px;width:1393px;height:77px;background:#2a2c3f;"></div>
<div style="left:488px;top:841px;width:1393px;height:46px;background:#2b2d41;"></div>
<svg style="left:497.6px;top:856.4px;" width="11.6" height="13.4" viewBox="0 0 11.6 13.4"><path d="M1.2 1.2 L5.8 5.6 L10.4 1.2 M1.2 7.2 L5.8 11.6 L10.4 7.2" fill="none" stroke="#b5b6ce" stroke-width="2.2" stroke-linejoin="round"/></svg>
<svg style="left:529px;top:856.2px;" width="16.4" height="16.4" viewBox="0 0 16.4 16.4"><circle cx="8.2" cy="8.2" r="6.8" fill="none" stroke="#b5b6ce" stroke-width="2"/><path d="M3.6 3.8 L12.8 12.6" stroke="#b5b6ce" stroke-width="2"/></svg>
<span class="t" style="top:853.8px;font:400 17px/24px 'Liberation Sans', sans-serif;color:#a9aac3;left:566.4px;display:inline-block;transform:scaleX(0.9083);transform-origin:0 50%;">0</span>
<div style="left:606.6px;top:853px;width:21px;height:21.6px;background:#303247;border-radius:3.5px;box-sizing:border-box;border:1.2px solid #45475e;"></div>
<span class="t" style="top:854.3px;font:400 17.8px/25px 'Liberation Sans', sans-serif;color:#b3b4cb;letter-spacing:-0.085px;left:639px;">listen on network</span>
<svg style="left:818px;top:855.2px;" width="16.4" height="16.4" viewBox="0 0 16.4 16.4"><circle cx="6.6" cy="6.6" r="5" fill="none" stroke="#c5c6dc" stroke-width="2.3"/><path d="M10.4 10.4 L14.8 14.8" stroke="#c5c6dc" stroke-width="2.8" stroke-linecap="round"/></svg>
<div style="left:854.6px;top:848.4px;width:370.2px;height:33px;background:#33364a;border-radius:3px;box-sizing:border-box;border:1px solid #3c3f55;"></div>
<span class="t" style="top:853px;font:400 17.4px/24px 'Liberation Sans', sans-serif;color:#8e8fa9;left:872px;display:inline-block;transform:scaleX(1.0602);transform-origin:0 50%;">Search with transaction hash or address</span>
<svg style="left:520px;top:898px;" width="25.4" height="25.4" viewBox="0 0 25.4 25.4"><circle cx="12.7" cy="12.7" r="12.7" fill="#32ba89"/><path d="M6 13 L10.8 17.6 L19.4 8.6" fill="none" stroke="#222336" stroke-width="3.6"/></svg>
<span class="t" style="top:894px;font:700 13.7px/19px 'Liberation Mono', monospace;color:#b9bad2;letter-spacing:1.229px;left:571.2px;">[block:7843716 txIndex:0]</span>
<span class="t" style="top:894px;font:700 13.7px/19px 'Liberation Mono', monospace;color:#b9bad2;letter-spacing:1.229px;left:821.8px;">from:</span>
<span class="t" style="top:894px;font:400 13.7px/19px 'Liberation Mono', monospace;color:#a6a7c1;letter-spacing:1.229px;left:878.6px;">0xf39...92266</span>
<span class="t" style="top:894px;font:700 13.7px/19px 'Liberation Mono', monospace;color:#b9bad2;letter-spacing:1.229px;left:1007.6px;">to:</span>
<span class="t" style="top:894px;font:400 13.7px/19px 'Liberation Mono', monospace;color:#a6a7c1;letter-spacing:1.229px;left:1045.1px;">Storage.store(uint256)</span>
<span class="t" style="top:894px;font:400 13.7px/19px 'Liberation Mono', monospace;color:#a6a7c1;letter-spacing:1.229px;left:1263.1px;">0x8E4...372cE</span>
<span class="t" style="top:894px;font:700 13.7px/19px 'Liberation Mono', monospace;color:#b9bad2;letter-spacing:1.229px;left:1391.9px;">value:</span>
<span class="t" style="top:894px;font:400 13.7px/19px 'Liberation Mono', monospace;color:#a6a7c1;letter-spacing:1.229px;left:1458.6px;">0 wei</span>
<span class="t" style="top:894px;font:700 13.7px/19px 'Liberation Mono', monospace;color:#b9bad2;letter-spacing:1.229px;left:1511.9px;">data:</span>
<span class="t" style="top:894px;font:400 13.7px/19px 'Liberation Mono', monospace;color:#a6a7c1;letter-spacing:1.229px;left:1568.9px;">0x605...00008</span>
<span class="t" style="top:913px;font:700 13.7px/19px 'Liberation Mono', monospace;color:#b9bad2;letter-spacing:1.229px;left:572.2px;">logs:</span>
<span class="t" style="top:913px;font:400 13.7px/19px 'Liberation Mono', monospace;color:#a6a7c1;letter-spacing:1.229px;left:629px;">0</span>
<span class="t" style="top:913px;font:700 13.7px/19px 'Liberation Mono', monospace;color:#b9bad2;letter-spacing:1.229px;left:644.6px;">hash:</span>
<span class="t" style="top:913px;font:400 13.7px/19px 'Liberation Mono', monospace;color:#a6a7c1;letter-spacing:1.229px;left:701.6px;">0xfa9...1fdf8</span>
<span class="t" style="top:969px;font:400 14.1px/20px 'DejaVu Sans Mono', 'Liberation Mono', monospace;color:#babbd1;letter-spacing:0.039px;left:519.4px;">call to Storage.retrieve</span>
<span class="t" style="top:1078.4px;font:italic 700 7.2px/10px 'Liberation Serif', serif;color:#b9bad2;left:522px;display:inline-block;transform:scaleX(1.1755);transform-origin:0 50%;">CALL</span>
<span class="t" style="top:1073.9px;font:700 13.7px/19px 'Liberation Mono', monospace;color:#b9bad2;letter-spacing:1.229px;left:571.4px;">[call]</span>
<span class="t" style="top:1073.9px;font:700 13.7px/19px 'Liberation Mono', monospace;color:#b9bad2;letter-spacing:1.229px;left:642.6px;">from:</span>
<span class="t" style="top:1073.9px;font:400 13.7px/19px 'Liberation Mono', monospace;color:#a6a7c1;letter-spacing:1.229px;left:698.6px;">0xf39Fd6e51aad88F6F4ce6aB8827279cffFb92266</span>
<span class="t" style="top:1073.9px;font:700 13.7px/19px 'Liberation Mono', monospace;color:#b9bad2;letter-spacing:1.229px;left:1101.9px;">to:</span>
<span class="t" style="top:1073.9px;font:400 13.7px/19px 'Liberation Mono', monospace;color:#a6a7c1;letter-spacing:1.229px;left:1139.9px;">Storage.retrieve()</span>
<span class="t" style="top:1073.9px;font:700 13.7px/19px 'Liberation Mono', monospace;color:#b9bad2;letter-spacing:1.229px;left:1316.1px;">data:</span>
<span class="t" style="top:1073.9px;font:400 13.7px/19px 'Liberation Mono', monospace;color:#a6a7c1;letter-spacing:1.229px;left:1373.6px;">0x2e6...4cec1</span>
<div style="left:1738.2px;top:894.4px;width:71.8px;height:35.6px;background:#007aa6;border-radius:3px;"></div>
<div class="t" style="top:902px;font:700 14.4px/20px 'Liberation Serif', 'DejaVu Serif', serif;color:#fff;letter-spacing:1.403px;left:1274.1px;width:1000px;text-align:center;"><span>Debug</span></div>
<div style="left:1738.2px;top:1065.6px;width:71.8px;height:35.6px;background:#007aa6;border-radius:3px;"></div>
<div class="t" style="top:1073.2px;font:700 14.4px/20px 'Liberation Serif', 'DejaVu Serif', serif;color:#fff;letter-spacing:1.403px;left:1274.1px;width:1000px;text-align:center;"><span>Debug</span></div>
<svg style="left:1822.8px;top:905.1px;" width="16.4" height="11.4" viewBox="0 0 16.4 11.4"><path d="M2 2 L8.2 9.4 L14.4 2" fill="none" stroke="#b5b6ce" stroke-width="3" stroke-linejoin="round"/></svg>
<svg style="left:1822.8px;top:1077.1px;" width="16.4" height="11.4" viewBox="0 0 16.4 11.4"><path d="M2 2 L8.2 9.4 L14.4 2" fill="none" stroke="#b5b6ce" stroke-width="3" stroke-linejoin="round"/></svg>
<span class="t" style="top:1117.6px;font:700 17px/24px 'DejaVu Sans Mono', 'Liberation Mono', monospace;color:#c5c6dc;left:494px;display:inline-block;transform:scaleX(1.1122);transform-origin:0 50%;">&gt;</span>
<div style="left:1871px;top:1097.4px;width:10px;height:60px;background:#404259;border-radius:5px 0 0 0;"></div>
<div style="left:0px;top:0px;width:1881px;height:1150px;background:transparent;border-radius:11px;box-shadow:inset 0 1px 0 rgba(255,255,255,.27),inset 0 0 0 1px rgba(255,255,255,.07);pointer-events:none;"></div>
</div>
</body></html>
